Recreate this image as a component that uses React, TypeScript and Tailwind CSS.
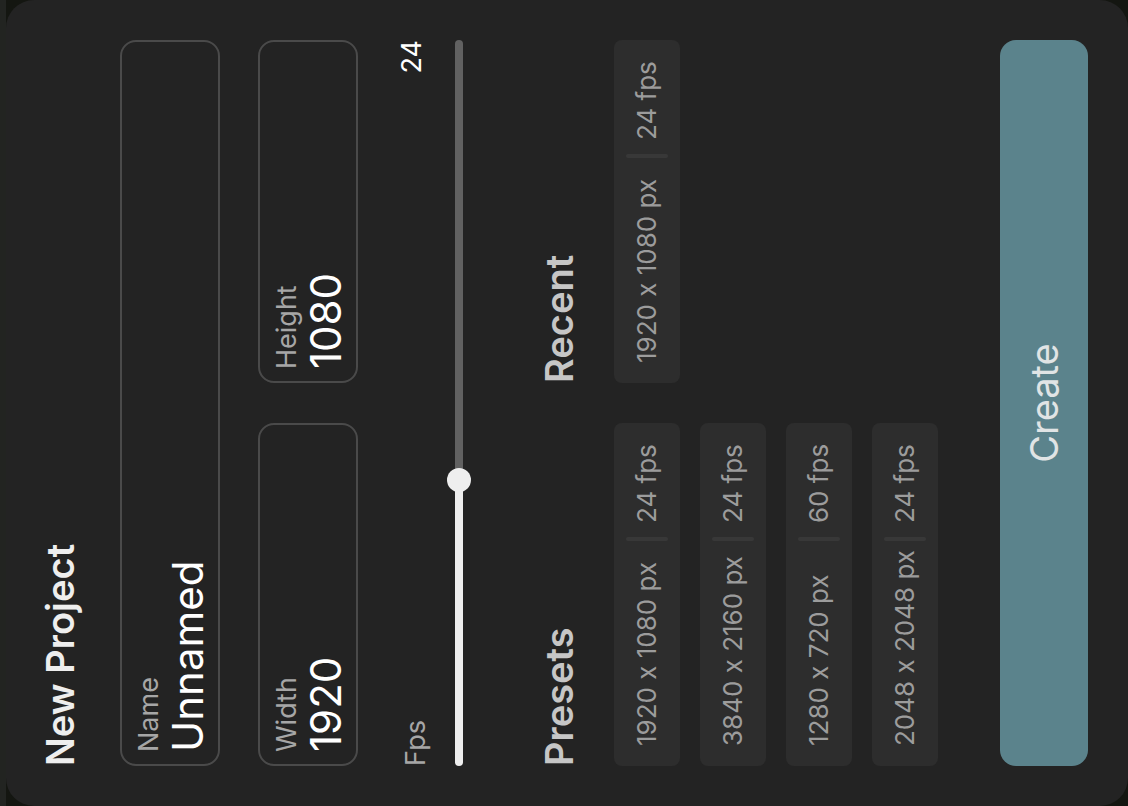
import { useId, useState, type CSSProperties } from "react";

type Format = { width: number; height: number; fps: number };

const presets: Format[] = [
  { width: 1920, height: 1080, fps: 24 },
  { width: 3840, height: 2160, fps: 24 },
  { width: 1280, height: 720, fps: 60 },
  { width: 2048, height: 2048, fps: 24 },
];

const recent: Format[] = [{ width: 1920, height: 1080, fps: 24 }];

const MIN_FPS = 1;
const MAX_FPS = 60;

type FieldProps = {
  label: string;
  value: string;
  numeric?: boolean;
  onChange: (value: string) => void;
};

function Field({ label, value, numeric, onChange }: FieldProps) {
  const id = useId();
  return (
    <div className="flex min-w-0 flex-col rounded-2xl border-2 border-[#4a4a4a] px-3 pt-2.5 pb-2 focus-within:border-[#8a8a8a]">
      <label htmlFor={id} className="text-[27px] leading-[34px] text-[#a6a6a6]">
        {label}
      </label>
      <input
        id={id}
        type="text"
        inputMode={numeric ? "numeric" : "text"}
        value={value}
        onChange={(e) => onChange(e.target.value)}
        className="h-11 w-full bg-transparent text-[42px] leading-[44px] text-white outline-none"
      />
    </div>
  );
}

function FpsSlider({ value, onChange }: { value: number; onChange: (value: number) => void }) {
  const id = useId();
  const ratio = (value - MIN_FPS) / (MAX_FPS - MIN_FPS);
  const fill = { "--fill": `calc(12px + ${ratio} * (100% - 24px))` } as CSSProperties;
  return (
    <div className="mt-[38px] flex flex-col">
      <div className="flex h-9 items-start justify-between text-[27px] leading-8">
        <label htmlFor={id} className="pt-1 text-[#a6a6a6]">
          Fps
        </label>
        <output htmlFor={id} className="text-white">
          {value}
        </output>
      </div>
      <input
        id={id}
        type="range"
        min={MIN_FPS}
        max={MAX_FPS}
        value={value}
        onChange={(e) => onChange(Number(e.target.value))}
        style={fill}
        className="mt-[15px] h-6 w-full cursor-pointer appearance-none bg-transparent outline-none [&::-webkit-slider-runnable-track]:h-2 [&::-webkit-slider-runnable-track]:rounded-full [&::-webkit-slider-runnable-track]:bg-[linear-gradient(to_right,#eeeeee_var(--fill),#616161_var(--fill))] [&::-webkit-slider-thumb]:-mt-2 [&::-webkit-slider-thumb]:size-6 [&::-webkit-slider-thumb]:appearance-none [&::-webkit-slider-thumb]:rounded-full [&::-webkit-slider-thumb]:bg-[#eeeeee]"
      />
    </div>
  );
}

type FormatListProps = {
  title: string;
  items: Format[];
  onPick: (format: Format) => void;
};

function FormatList({ title, items, onPick }: FormatListProps) {
  return (
    <section className="min-w-0">
      <h2 className="text-[38px] leading-[48px] font-semibold text-[#c6c6c6]">{title}</h2>
      <ul className="mt-[31px] flex flex-col gap-5">
        {items.map((item) => (
          <li key={`${item.width}x${item.height}@${item.fps}`}>
            <button
              type="button"
              onClick={() => onPick(item)}
              className="flex h-[66px] w-full items-center rounded-lg bg-[#2d2d2d] pl-5 text-left text-[26px] leading-8 whitespace-nowrap text-[#9c9c9c]"
            >
              <span className="flex-1">
                {item.width} x {item.height} px
              </span>
              <span className="h-[42px] w-1 rounded-full bg-[#383838]" />
              <span className="w-[114px] pl-3.5">{item.fps} fps</span>
            </button>
          </li>
        ))}
      </ul>
    </section>
  );
}

export default function App() {
  const [name, setName] = useState("Unnamed");
  const [width, setWidth] = useState("1920");
  const [height, setHeight] = useState("1080");
  const [fps, setFps] = useState(24);

  const pick = (format: Format) => {
    setWidth(String(format.width));
    setHeight(String(format.height));
    setFps(format.fps);
  };

  return (
    <div className="h-screen overflow-hidden bg-[#141611] font-['Inter',sans-serif] [font-feature-settings:'calt'_0]">
      <div className="flex min-h-[100vw] w-[100vh] origin-top-left translate-y-[100vh] -rotate-90 flex-col border-t-[6px] border-[#222421]">
        <form
          onSubmit={(e) => e.preventDefault()}
          className="flex flex-1 flex-col rounded-[28px] bg-[#232323] px-10 pt-[30px] pb-10"
        >
          <h1 className="text-[38px] leading-[48px] font-semibold text-[#eeeeee]">New Project</h1>
          <div className="mt-9 grid">
            <Field label="Name" value={name} onChange={setName} />
          </div>
          <div className="mt-[38px] grid grid-cols-2 gap-10">
            <Field label="Width" value={width} numeric onChange={setWidth} />
            <Field label="Height" value={height} numeric onChange={setHeight} />
          </div>
          <FpsSlider value={fps} onChange={setFps} />
          <div className="mt-16 mb-10 grid grid-cols-2 gap-10">
            <FormatList title="Presets" items={presets} onPick={pick} />
            <FormatList title="Recent" items={recent} onPick={pick} />
          </div>
          <button
            type="submit"
            className="mt-auto h-[88px] rounded-2xl bg-[#5b838c] text-[38px] leading-[48px] text-[#e0e4e5]"
          >
            Create
          </button>
        </form>
      </div>
    </div>
  );
}
